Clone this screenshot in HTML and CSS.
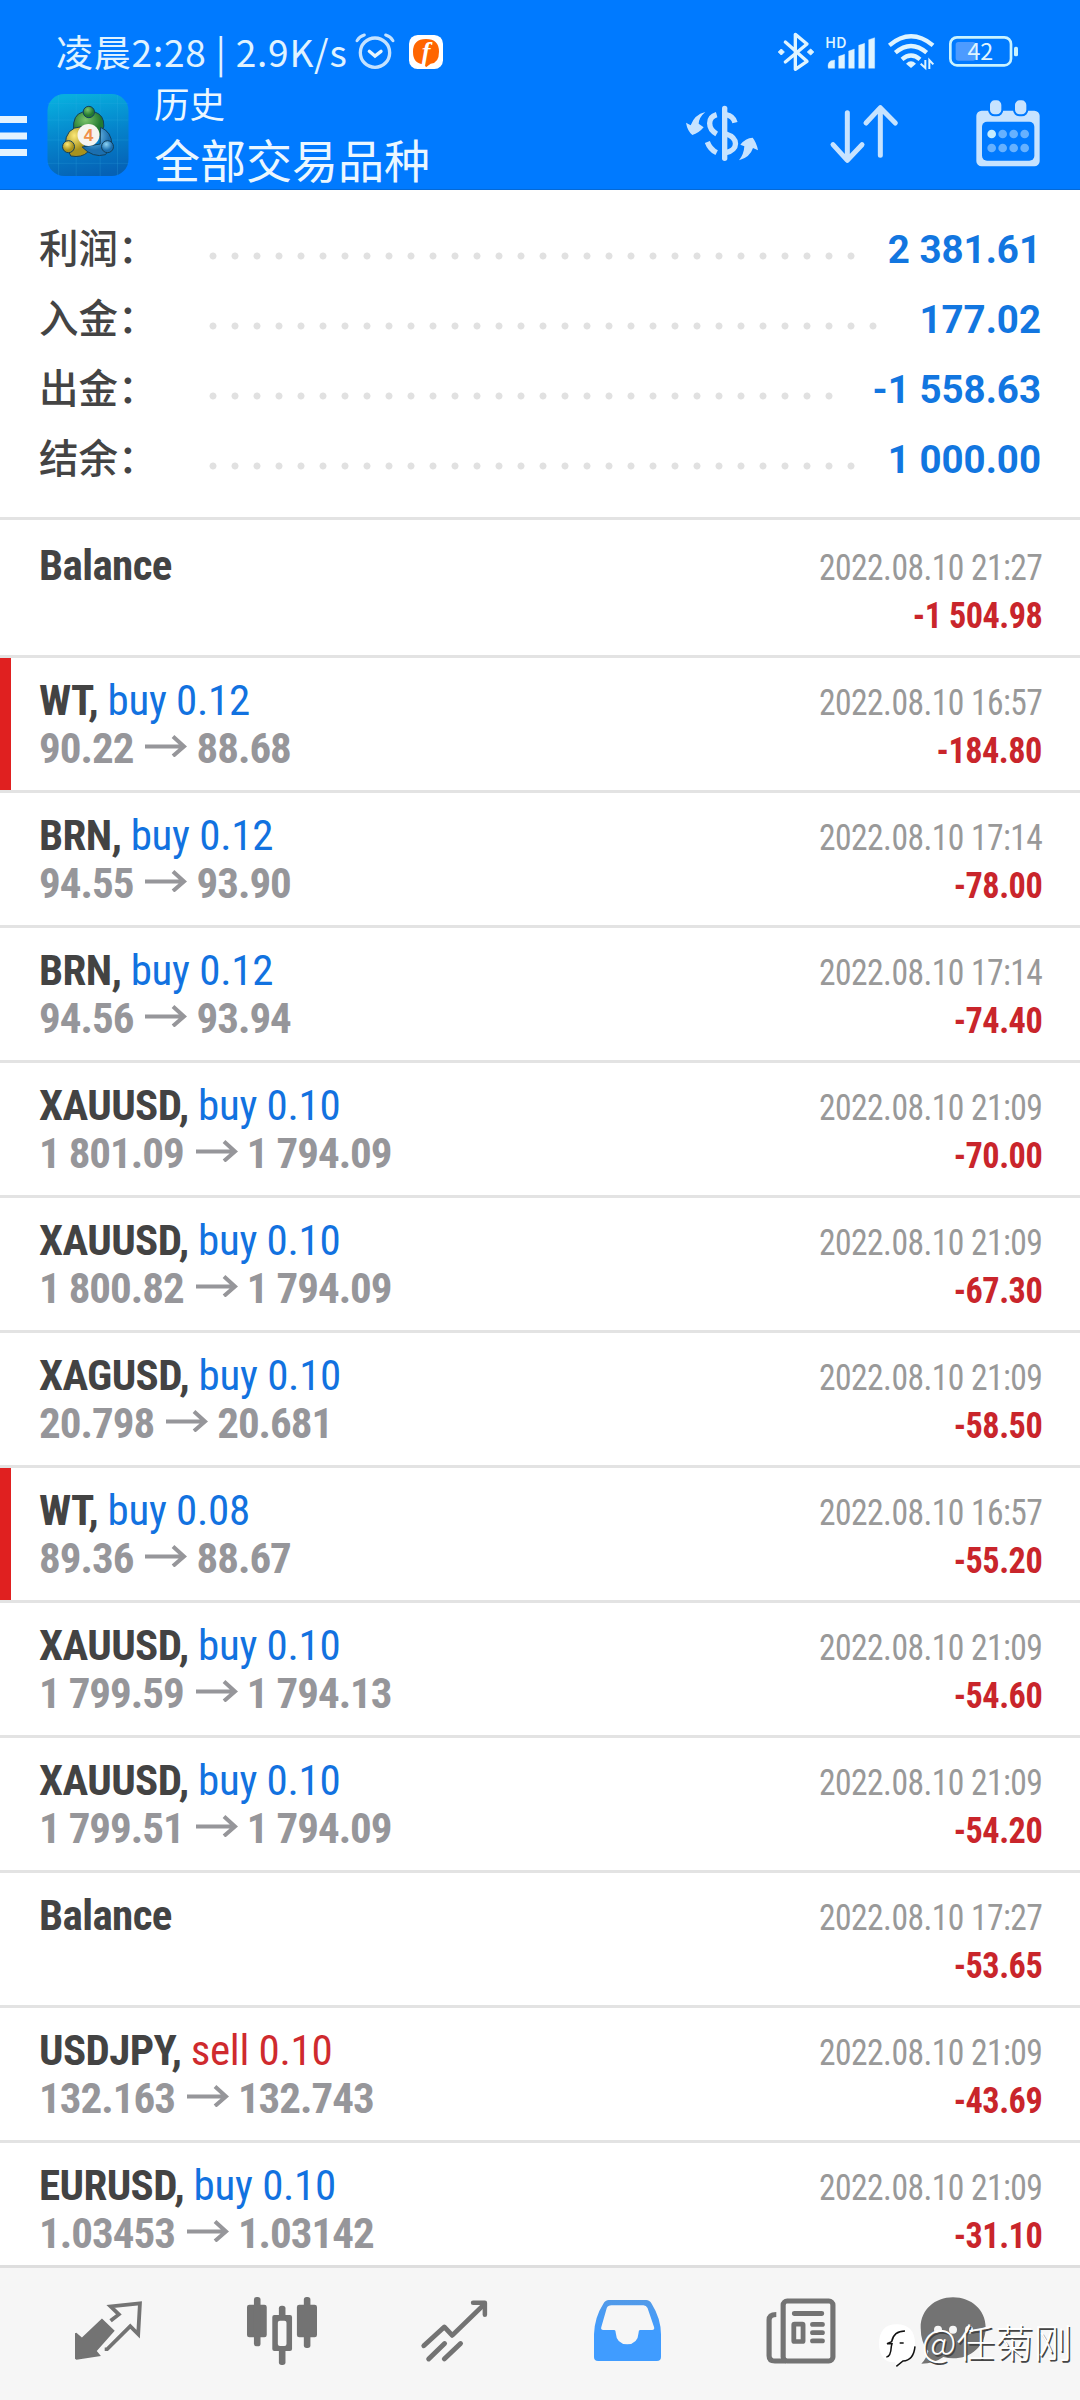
FILE: index.html
```html
<!DOCTYPE html>
<html lang="zh-CN">
<head>
<meta charset="utf-8">
<title>历史</title>
<link rel="stylesheet" href="styles.css">
</head>
<body>
<svg width="0" height="0" class="defs">
  <symbol id="arrow" viewBox="0 0 42 22"><path d="M0 11.5H38M28 1.5L39 11.5L28 21" fill="none" stroke="#96969a" stroke-width="4"/></symbol>
</svg>
<header class="header">
  <div class="status">
    <span class="status-time">凌晨2:28 | 2.9K/s</span>
    <svg class="alarm" width="40" height="37" viewBox="943 40 120 111"><g fill="none" stroke="#c4e2ff" stroke-width="10" stroke-linecap="round"><circle cx="1003" cy="99" r="44"/><path d="M949 63Q957 50 971 46M1057 63Q1049 50 1035 46" stroke-width="9"/><path d="M986 95L1003 109L1021 95" stroke="#e6f6ff"/></g></svg>
    <svg class="fapp" width="34" height="34" viewBox="1107 44 102 102"><rect x="1107" y="44" width="102" height="102" rx="26" fill="#fff"/><path d="M1119 94Q1119 56 1158 56T1197 94Q1197 128 1172 130L1158 141L1153 131Q1119 132 1119 94Z" fill="#ff6500"/><text x="1158" y="120" text-anchor="middle" class="f-letter">f</text></svg>
    <div class="status-right">
      <svg width="36" height="39" viewBox="324 36 108 117"><path d="M346 66L411 124L376 148V43L411 72L346 126" fill="none" stroke="#dff4ff" stroke-width="10" stroke-linejoin="round" stroke-linecap="round"/><path d="M325 96L334 87L343 96L334 105ZM412 96L422 87L431 96L422 105Z" fill="#dff4ff" stroke="#dff4ff" stroke-width="3"/></svg>
      <svg class="signal" width="51" height="34" viewBox="464 44 153 102"><text x="464" y="83" class="hd">HD</text><path d="M474 144Q470 128 482 121L493 119V144ZM505 144V108L523 102V144ZM535 144V92L552 86V144ZM565 144V75L583 69V144ZM595 144V58L613 52V144Z" fill="#dff4ff" stroke="#dff4ff" stroke-width="1" stroke-linejoin="round"/></svg>
      <svg class="wifi" width="47" height="35" viewBox="653 46 141 105"><g fill="none" stroke="#dff4ff" stroke-width="13"><path d="M657 80Q722 26 788 80"/><path d="M675 102Q722 62 769 102"/><path d="M695 122Q722 99 749 122"/><path d="M765 124V148L751 135M777 151V124L789 137" stroke-width="6"/></g><path d="M722 148L707 135Q722 121 737 135Z" fill="#dff4ff"/></svg>
      <svg class="battery" width="70" height="31" viewBox="837 50 210 93"><rect x="841" y="54" width="182" height="84" rx="20" fill="none" stroke="#c9f3ff" stroke-width="8"/><rect x="857" y="68" width="60" height="56" rx="8" fill="#4d9bff"/><rect x="1032" y="82" width="12" height="29" rx="5" fill="#c9f3ff"/><text x="931" y="123" text-anchor="middle" class="pct">42</text></svg>
    </div>
  </div>
  <div class="toolbar">
    <svg width="28" height="40" viewBox="0 0 28 40"><path d="M0 3.5H27M0 20H27M0 36.500H27" stroke="#e3f3ff" stroke-width="7"/></svg>
    <svg class="logo" width="82" height="82" viewBox="22 222 243 246">
      <defs>
        <linearGradient id="bg" x1=".4" y1="0" x2=".6" y2="1"><stop offset="0" stop-color="#08aede"/><stop offset=".5" stop-color="#0583cb"/><stop offset="1" stop-color="#0561b5"/></linearGradient>
        <radialGradient id="gr" cx=".4" cy=".3"><stop offset="0" stop-color="#7cc46a"/><stop offset="1" stop-color="#237a32"/></radialGradient>
        <radialGradient id="ye" cx=".4" cy=".3"><stop offset="0" stop-color="#fbe878"/><stop offset="1" stop-color="#a8921c"/></radialGradient>
        <radialGradient id="bl" cx=".4" cy=".3"><stop offset="0" stop-color="#8bd2f4"/><stop offset="1" stop-color="#1b6fb0"/></radialGradient>
      </defs>
      <rect x="22" y="222" width="243" height="246" rx="50" fill="url(#bg)"/>
      <path d="M55 225V465M108 222V468M180 222V468M232 225V465M22 250H265M22 300H265M22 360H265M22 430H265" stroke="#35b3e6" stroke-opacity=".3" stroke-width="2"/>
      <g stroke="#12405c" stroke-width="3">
        <path d="M100 330Q97 283 128 276H164Q192 285 191 318Q188 340 174 355L146 318Z" fill="url(#gr)"/>
        <path d="M124 320Q76 322 75 375L92 408Q125 414 143 396L124 360Z" fill="url(#ye)"/>
        <path d="M181 322Q215 335 215 375L196 404Q158 415 126 381L180 372Z" fill="url(#bl)"/>
        <circle cx="146" cy="276" r="17" fill="url(#gr)"/>
        <circle cx="85" cy="380" r="18" fill="url(#ye)"/>
        <circle cx="202" cy="380" r="18" fill="url(#bl)"/>
      </g>
      <circle cx="145" cy="345" r="33" fill="#f6f4f0"/>
      <text x="145" y="364" text-anchor="middle" class="four">4</text>
    </svg>
    <div class="titles"><div class="sub">历史</div><div class="main">全部交易品种</div></div>
    <div class="actions">
      <svg width="74" height="57" viewBox="45 255 222 171"><g fill="none" stroke="#c7e3ff" stroke-width="16"><path d="M140 284C112 292 112 326 140 342M112 366Q120 388 140 398M168 284Q190 288 195 308M168 342C206 354 206 390 168 398"/><path d="M164 265V415" stroke-linecap="round"/></g><path d="M106 276Q87 292 86 311L101 322Q86 340 67 345Q52 332 48 308L62 316Q73 284 106 276ZM207 421Q222 402 223 379L211 374Q226 354 248 353Q260 368 264 391L249 384Q240 412 207 421Z" fill="#c7e3ff"/></svg>
      <svg class="sort" width="68" height="60" viewBox="483 254 204 180"><path d="M535 280V422M492 376L535 423L579 376M634 408V266M591 311L634 265L679 311" fill="none" stroke="#c7e3ff" stroke-width="15" stroke-linecap="round" stroke-linejoin="round"/></svg>
      <svg class="cal" width="64" height="67" viewBox="919 241 192 201"><rect x="920" y="273" width="190" height="167" rx="16" fill="#c7e3ff"/><rect x="937" y="306" width="157" height="117" rx="15" fill="#007aff"/><g fill="#c7e3ff" stroke="#007aff" stroke-width="6"><rect x="958" y="239" width="40" height="48" rx="17"/><rect x="1033" y="239" width="40" height="48" rx="17"/></g><circle cx="966" cy="343" r="13" fill="#c5ecff"/><g fill="#66b1ff"><circle cx="999" cy="343" r="13"/><circle cx="1032" cy="343" r="13"/><circle cx="1065" cy="343" r="13"/><circle cx="966" cy="385" r="13"/><circle cx="999" cy="385" r="13"/><circle cx="1032" cy="385" r="13"/><circle cx="1065" cy="385" r="13"/></g></svg>
    </div>
  </div>
</header>
<section class="summary">
  <div class="sum-row"><span class="label">利润：</span><span class="dots"></span><b class="value">2 381.61</b></div>
  <div class="sum-row"><span class="label">入金：</span><span class="dots"></span><b class="value">177.02</b></div>
  <div class="sum-row"><span class="label">出金：</span><span class="dots"></span><b class="value">-1 558.63</b></div>
  <div class="sum-row"><span class="label">结余：</span><span class="dots"></span><b class="value">1 000.00</b></div>
</section>
<main class="list">
  <div class="row"><div class="line"><span class="name">Balance</span><span class="date">2022.08.10 21:27</span></div><div class="line"><span class="price">&nbsp;</span><span class="amount">-1 504.98</span></div></div>
  <div class="row flag"><div class="line"><span class="name">WT, <i class="buy">buy 0.12</i></span><span class="date">2022.08.10 16:57</span></div><div class="line"><span class="price">90.22<svg class="arr"><use href="#arrow"/></svg>88.68</span><span class="amount">-184.80</span></div></div>
  <div class="row"><div class="line"><span class="name">BRN, <i class="buy">buy 0.12</i></span><span class="date">2022.08.10 17:14</span></div><div class="line"><span class="price">94.55<svg class="arr"><use href="#arrow"/></svg>93.90</span><span class="amount">-78.00</span></div></div>
  <div class="row"><div class="line"><span class="name">BRN, <i class="buy">buy 0.12</i></span><span class="date">2022.08.10 17:14</span></div><div class="line"><span class="price">94.56<svg class="arr"><use href="#arrow"/></svg>93.94</span><span class="amount">-74.40</span></div></div>
  <div class="row"><div class="line"><span class="name">XAUUSD, <i class="buy">buy 0.10</i></span><span class="date">2022.08.10 21:09</span></div><div class="line"><span class="price">1 801.09<svg class="arr"><use href="#arrow"/></svg>1 794.09</span><span class="amount">-70.00</span></div></div>
  <div class="row"><div class="line"><span class="name">XAUUSD, <i class="buy">buy 0.10</i></span><span class="date">2022.08.10 21:09</span></div><div class="line"><span class="price">1 800.82<svg class="arr"><use href="#arrow"/></svg>1 794.09</span><span class="amount">-67.30</span></div></div>
  <div class="row"><div class="line"><span class="name">XAGUSD, <i class="buy">buy 0.10</i></span><span class="date">2022.08.10 21:09</span></div><div class="line"><span class="price">20.798<svg class="arr"><use href="#arrow"/></svg>20.681</span><span class="amount">-58.50</span></div></div>
  <div class="row flag"><div class="line"><span class="name">WT, <i class="buy">buy 0.08</i></span><span class="date">2022.08.10 16:57</span></div><div class="line"><span class="price">89.36<svg class="arr"><use href="#arrow"/></svg>88.67</span><span class="amount">-55.20</span></div></div>
  <div class="row"><div class="line"><span class="name">XAUUSD, <i class="buy">buy 0.10</i></span><span class="date">2022.08.10 21:09</span></div><div class="line"><span class="price">1 799.59<svg class="arr"><use href="#arrow"/></svg>1 794.13</span><span class="amount">-54.60</span></div></div>
  <div class="row"><div class="line"><span class="name">XAUUSD, <i class="buy">buy 0.10</i></span><span class="date">2022.08.10 21:09</span></div><div class="line"><span class="price">1 799.51<svg class="arr"><use href="#arrow"/></svg>1 794.09</span><span class="amount">-54.20</span></div></div>
  <div class="row"><div class="line"><span class="name">Balance</span><span class="date">2022.08.10 17:27</span></div><div class="line"><span class="price">&nbsp;</span><span class="amount">-53.65</span></div></div>
  <div class="row"><div class="line"><span class="name">USDJPY, <i class="sell">sell 0.10</i></span><span class="date">2022.08.10 21:09</span></div><div class="line"><span class="price">132.163<svg class="arr"><use href="#arrow"/></svg>132.743</span><span class="amount">-43.69</span></div></div>
  <div class="row"><div class="line"><span class="name">EURUSD, <i class="buy">buy 0.10</i></span><span class="date">2022.08.10 21:09</span></div><div class="line"><span class="price">1.03453<svg class="arr"><use href="#arrow"/></svg>1.03142</span><span class="amount">-31.10</span></div></div>
</main>
<nav class="tabs">
  <svg width="67" height="59" viewBox="218 188 194 176" preserveAspectRatio="none"><path d="M296 240L333 277L281 337L293 352L222 363L218 360V284L222 283L238 297Z" fill="#737373"/><path d="M304 332H311L378 263L401 287L406 195L321 204L345 228L321 247" fill="none" stroke="#737373" stroke-width="11"/></svg>
  <svg width="70" height="68" viewBox="715 174 202 204" preserveAspectRatio="none"><g fill="#737373"><rect x="715" y="197" width="57" height="98" rx="7"/><rect x="735" y="174" width="19" height="148" rx="8"/><rect x="859" y="197" width="58" height="98" rx="7"/><rect x="879" y="174" width="19" height="153" rx="8"/><rect x="788" y="228" width="57" height="108" rx="6"/><rect x="807" y="200" width="19" height="178" rx="8"/></g><rect x="804" y="245" width="25" height="76" rx="6" fill="#f6f6f6"/></svg>
  <svg width="67" height="62" viewBox="1222 181 193 184" preserveAspectRatio="none"><path d="M1230 317L1289 261L1312 286L1404 194M1244 356L1290 310M1289 356L1336 310" fill="none" stroke="#737373" stroke-width="14" stroke-linecap="round" stroke-linejoin="round"/><path d="M1372 189H1406V225" fill="none" stroke="#737373" stroke-width="13" stroke-linecap="round" stroke-linejoin="round"/></svg>
  <svg width="67" height="61" viewBox="157 182 194 183" preserveAspectRatio="none"><defs><linearGradient id="inb" x2="0" y2="1"><stop offset="0" stop-color="#529ae8"/><stop offset=".5" stop-color="#409cff"/></linearGradient></defs><path fill-rule="evenodd" fill="url(#inb)" d="M200 182H308Q318 182 324 193Q351 238 351 285V353Q351 365 339 365H169Q157 365 157 353V285Q158 235 184 193Q190 182 200 182ZM208 198Q197 198 194 206L178 264Q176 272 184 272H216Q220 272 220 281Q222 314 253 315Q284 314 286 281Q286 272 290 272H325Q333 272 331 264L312 206Q308 198 300 198Z"/></svg>
  <svg width="70" height="66" viewBox="656 173 204 200" preserveAspectRatio="none"><g fill="none" stroke="#737373" stroke-width="15"><rect x="706" y="182" width="145" height="182" rx="12"/><path d="M686 223Q665 223 665 240V348Q665 364 682 364H715" /></g><g fill="none" stroke="#737373" stroke-width="15" stroke-linecap="round"><path d="M739 220H818M792 253H820M792 278H820M792 303H820"/></g><rect x="737" y="252" width="27" height="53" rx="2" fill="none" stroke="#737373" stroke-width="14"/></svg>
  <div class="chat">
    <svg width="66" height="67" viewBox="178 52 198 201"><path d="M277 53C331 53 375 90 375 144S331 236 277 236Q262 236 248 232Q220 252 182 252Q196 240 203 215Q180 188 180 144C180 90 223 53 277 53Z" fill="#737373"/><g fill="#f6f6f6"><circle cx="232" cy="150" r="12"/><circle cx="277" cy="150" r="12"/><circle cx="325" cy="150" r="12"/></g></svg>
    <div class="mark">
      <svg width="40" height="46" viewBox="54 117 120 138"><path d="M60 184Q60 124 113 124T168 180Q168 232 132 234L112 250L108 238Q62 240 60 184Z" fill="#fff"/><path d="M82 222Q95 222 97 190L99 182H84L98 176Q104 144 138 144M122 180H134M168 190Q164 232 132 234L112 250" fill="none" stroke="#111" stroke-width="4.500"/></svg>
      <span>@任菊刚</span>
    </div>
  </div>
</nav>
</body>
</html>
```
FILE: styles.css
```css
* { box-sizing: border-box; }
body {
  margin: 0;
  width: 1080px;
  height: 2400px;
  display: flex;
  flex-direction: column;
  overflow: hidden;
  background: #fff;
  font-family: Roboto, "Noto Sans CJK SC", sans-serif;
}
svg { display: block; flex: none; overflow: visible; }
.defs { position: absolute; }

.header {
  height: 190px;
  flex: none;
  background: #007aff;
  border-bottom: 1px solid #0569d6;
}
.status {
  height: 78px;
  padding: 25px 61px 0 56px;
  display: flex;
  align-items: center;
}
.status-time {
  font: 400 37px/54px "Noto Sans CJK SC", sans-serif;
  width: 299px;
  white-space: pre;
  letter-spacing: .8px;
  padding-bottom: 1px;
  color: #e0f3ff;
}
.fapp { margin-left: 14px; }
.f-letter { font: italic bold 78px "Liberation Serif", serif; fill: #fff; }
.status-right { margin-left: auto; display: flex; align-items: center; }
.signal { margin-left: 11px; }
.wifi { margin-left: 12px; }
.battery { margin-left: 14px; }
.hd { font: 500 45px/1 "Noto Sans CJK SC", sans-serif; fill: #dff4ff; }
.pct { font: 400 70px/1 "Noto Sans CJK SC", sans-serif; fill: #dff4ff; }

.toolbar {
  height: 111px;
  display: flex;
  align-items: center;
}
.toolbar > svg:first-child { margin-top: 5px; }
.logo { margin: 3px 0 0 19px; }
.four { font: bold 52px "Liberation Sans", sans-serif; fill: #f0904a; }
.titles {
  margin-left: 25px;
  color: #ebf7ff;
  font-family: "Noto Sans CJK SC", sans-serif;
  font-weight: 400;
}
.sub { font-size: 35.500px; line-height: 50px; }
.main { font-size: 46px; line-height: 61px; }
.actions { margin-left: auto; margin-right: 40px; display: flex; align-items: center; }
.sort { margin-left: 71px; }
.cal { margin-left: 78px; }

.summary {
  flex: none;
  height: 330px;
  padding: 23px 39px 0 39px;
  border-bottom: 3px solid #e3e3e3;
}
.sum-row { height: 70px; display: flex; align-items: center; }
.label {
  width: 163px;
  font: 500 39.500px/66px "Noto Sans CJK SC", sans-serif;
  padding-bottom: 4px;
  color: #444;
}
.dots {
  flex: 1;
  height: 22px;
  margin: 15px 30px 0 0;
  background: radial-gradient(circle at 11px 11px, #e1e1e1 3.100px, transparent 3.900px) 0 0 / 22px 22px;
}
.value { font-size: 38.500px; line-height: 67px; padding-top: 3px; color: #1276e0; }

.list {
  flex: 1;
  min-height: 0;
  overflow: hidden;
  padding-top: 3px;
  font-family: "Roboto Condensed", Roboto, sans-serif;
}
.row {
  height: 135px;
  padding: 18px 38px 0 39px;
  border-bottom: 3px solid #e3e3e3;
}
.flag { background: linear-gradient(90deg, #e02020 11px, transparent 11px); }
.line {
  height: 48px;
  line-height: 48px;
  display: flex;
  justify-content: space-between;
  align-items: baseline;
  white-space: nowrap;
}
.name { font-size: 43px; font-weight: 700; color: #434343; letter-spacing: -.6px; }
.name i { font-style: normal; font-weight: 400; letter-spacing: -.3px; }
.buy { color: #1272e0; }
.sell { color: #cf2a2e; }
.price { font-size: 43px; font-weight: 700; color: #96969a; letter-spacing: -1px; }
.arr { display: inline-block; width: 42px; height: 22px; margin: 0 9px 6px 12px; }
.date {
  font-size: 36px;
  color: #999;
  letter-spacing: -.6px;
  transform: scaleX(.933);
  transform-origin: right;
}
.amount {
  font-size: 36px;
  font-weight: 700;
  color: #c9252b;
  letter-spacing: -.5px;
  transform: scaleX(.95);
  transform-origin: right;
}

.tabs {
  flex: none;
  height: 135px;
  padding: 0 0 7px 22px;
  display: grid;
  grid-template-columns: repeat(5, 173px) 131px;
  align-items: center;
  justify-items: center;
  background: #f6f6f6;
  border-top: 3px solid #dedede;
}
.chat { position: relative; }
.mark {
  position: absolute;
  left: -43px;
  top: 20px;
  display: flex;
  align-items: center;
  white-space: nowrap;
}
.mark span {
  margin: 0 0 10px 5px;
  font: 300 38.500px/46px "Noto Sans CJK SC", sans-serif;
  color: #fff;
  text-shadow: 1.500px 1.500px 0 #444;
}
```
